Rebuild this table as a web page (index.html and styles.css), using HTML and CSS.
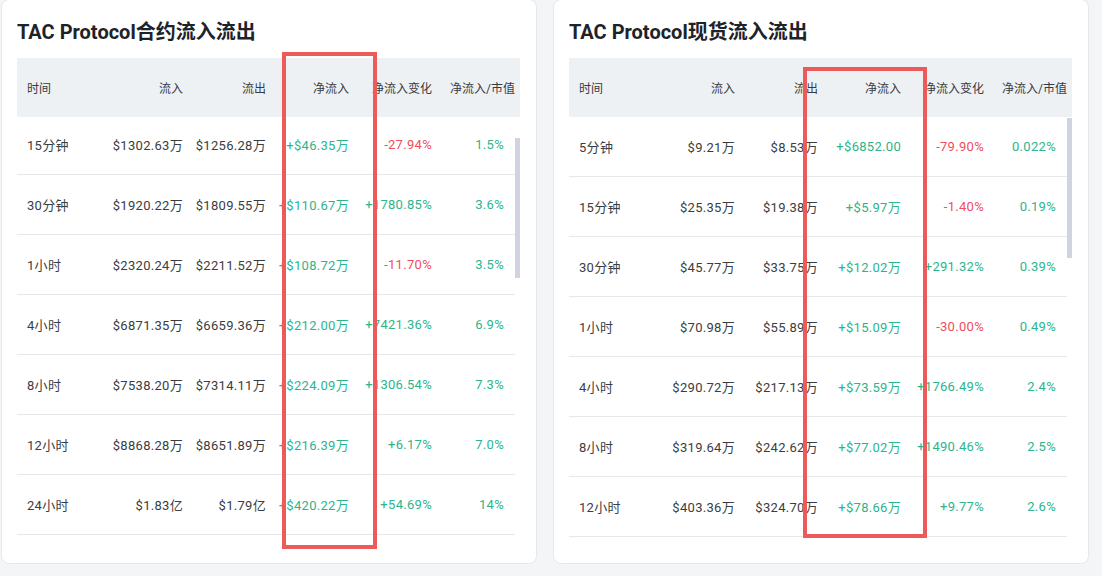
FILE: index.html
```html
<!DOCTYPE html>
<html lang="zh">
<head>
<meta charset="utf-8">
<title>TAC Protocol 流入流出</title>
<link rel="stylesheet" href="styles.css">
</head>
<body>
<div class="page">
  <section class="card">
    <h2 class="title">TAC Protocol合约流入流出</h2>
    <div class="table">
      <div class="thead">
        <div class="cell first">时间</div>
        <div class="cell">流入</div>
        <div class="cell">流出</div>
        <div class="cell">净流入</div>
        <div class="cell">净流入变化</div>
        <div class="cell">净流入/市值</div>
      </div>
      <div class="tbody-wrap">
        <div class="tbody scrolled">
          <div class="row"><div class="cell first">15分钟</div><div class="cell">$1302.63万</div><div class="cell">$1256.28万</div><div class="cell up">+$46.35万</div><div class="cell down">-27.94%</div><div class="cell up last">1.5%</div></div>
          <div class="row"><div class="cell first">30分钟</div><div class="cell">$1920.22万</div><div class="cell">$1809.55万</div><div class="cell up">+$110.67万</div><div class="cell up">+1780.85%</div><div class="cell up last">3.6%</div></div>
          <div class="row"><div class="cell first">1小时</div><div class="cell">$2320.24万</div><div class="cell">$2211.52万</div><div class="cell up">+$108.72万</div><div class="cell down">-11.70%</div><div class="cell up last">3.5%</div></div>
          <div class="row"><div class="cell first">4小时</div><div class="cell">$6871.35万</div><div class="cell">$6659.36万</div><div class="cell up">+$212.00万</div><div class="cell up">+7421.36%</div><div class="cell up last">6.9%</div></div>
          <div class="row"><div class="cell first">8小时</div><div class="cell">$7538.20万</div><div class="cell">$7314.11万</div><div class="cell up">+$224.09万</div><div class="cell up">+1306.54%</div><div class="cell up last">7.3%</div></div>
          <div class="row"><div class="cell first">12小时</div><div class="cell">$8868.28万</div><div class="cell">$8651.89万</div><div class="cell up">+$216.39万</div><div class="cell up">+6.17%</div><div class="cell up last">7.0%</div></div>
          <div class="row"><div class="cell first">24小时</div><div class="cell">$1.83亿</div><div class="cell">$1.79亿</div><div class="cell up">+$420.22万</div><div class="cell up">+54.69%</div><div class="cell up last">14%</div></div>
        </div>
        <div class="track"><div class="thumb thumb-left"></div></div>
      </div>
    </div>
  </section>
  <section class="card">
    <h2 class="title">TAC Protocol现货流入流出</h2>
    <div class="table">
      <div class="thead">
        <div class="cell first">时间</div>
        <div class="cell">流入</div>
        <div class="cell">流出</div>
        <div class="cell">净流入</div>
        <div class="cell">净流入变化</div>
        <div class="cell">净流入/市值</div>
      </div>
      <div class="tbody-wrap">
        <div class="tbody">
          <div class="row"><div class="cell first">5分钟</div><div class="cell">$9.21万</div><div class="cell">$8.53万</div><div class="cell up">+$6852.00</div><div class="cell down">-79.90%</div><div class="cell up last">0.022%</div></div>
          <div class="row"><div class="cell first">15分钟</div><div class="cell">$25.35万</div><div class="cell">$19.38万</div><div class="cell up">+$5.97万</div><div class="cell down">-1.40%</div><div class="cell up last">0.19%</div></div>
          <div class="row"><div class="cell first">30分钟</div><div class="cell">$45.77万</div><div class="cell">$33.75万</div><div class="cell up">+$12.02万</div><div class="cell up">+291.32%</div><div class="cell up last">0.39%</div></div>
          <div class="row"><div class="cell first">1小时</div><div class="cell">$70.98万</div><div class="cell">$55.89万</div><div class="cell up">+$15.09万</div><div class="cell down">-30.00%</div><div class="cell up last">0.49%</div></div>
          <div class="row"><div class="cell first">4小时</div><div class="cell">$290.72万</div><div class="cell">$217.13万</div><div class="cell up">+$73.59万</div><div class="cell up">+1766.49%</div><div class="cell up last">2.4%</div></div>
          <div class="row"><div class="cell first">8小时</div><div class="cell">$319.64万</div><div class="cell">$242.62万</div><div class="cell up">+$77.02万</div><div class="cell up">+1490.46%</div><div class="cell up last">2.5%</div></div>
          <div class="row"><div class="cell first">12小时</div><div class="cell">$403.36万</div><div class="cell">$324.70万</div><div class="cell up">+$78.66万</div><div class="cell up">+9.77%</div><div class="cell up last">2.6%</div></div>
        </div>
        <div class="track"><div class="thumb thumb-right"></div></div>
      </div>
    </div>
  </section>
  <div class="mark mark-left"></div>
  <div class="mark mark-right"></div>
</div>
</body>
</html>
```
FILE: styles.css
```css
html, body {
  margin: 0;
  padding: 0;
}
body {
  background: #f4f5f6;
  font-family: Roboto, "Noto Sans CJK SC", sans-serif;
  color: #333840;
  width: 1102px;
  height: 576px;
  overflow: hidden;
}
.page {
  position: relative;
  display: flex;
  gap: 16px;
  padding-left: 1px;
}
.card {
  box-sizing: border-box;
  width: 536px;
  height: 565px;
  margin-top: -1px;
  background: #fff;
  border: 1px solid #e7e8ea;
  border-radius: 8px;
  padding: 0 15px;
}
.title {
  margin: 0;
  padding-top: 20px;
  height: 38px;
  line-height: 24px;
  font-size: 20px;
  font-weight: 700;
  color: #1e2329;
}
.table {
  width: 503px;
}
.thead {
  display: grid;
  grid-template-columns: 88px 83px 83px 83px 83px 83px;
  height: 59px;
  align-items: center;
  background: #eef1f4;
  font-size: 12px;
  color: #363b42;
}
.cell {
  text-align: right;
  padding-right: 5px;
  white-space: nowrap;
}
.cell.first {
  text-align: left;
  padding-left: 10px;
  padding-right: 0;
}
.tbody-wrap {
  display: flex;
  height: 420px;
  overflow: hidden;
}
.tbody {
  width: 498px;
}
.tbody.scrolled {
  margin-top: -2px;
}
.row {
  display: grid;
  grid-template-columns: 88px 83px 83px 83px 83px 78px;
  height: 59px;
  align-items: center;
  border-bottom: 1px solid #e6e8eb;
  font-size: 13px;
  letter-spacing: 0.3px;
  color: #3a3d42;
}
.row .cell.last {
  padding-right: 11px;
}
.up {
  color: #2cb48c;
}
.down {
  color: #ef4d5c;
}
.track {
  width: 5px;
}
.thumb {
  width: 5px;
  height: 140px;
  background: #cfd4df;
}
.thumb-left {
  margin-top: 21px;
}
.thumb-right {
  margin-top: 1px;
}
.mark {
  position: absolute;
  box-sizing: border-box;
  border: 4px solid #ec5a5a;
}
.mark-left {
  left: 282px;
  top: 52px;
  width: 95px;
  height: 497px;
}
.mark-right {
  left: 803px;
  top: 67px;
  width: 124px;
  height: 471px;
}
```
